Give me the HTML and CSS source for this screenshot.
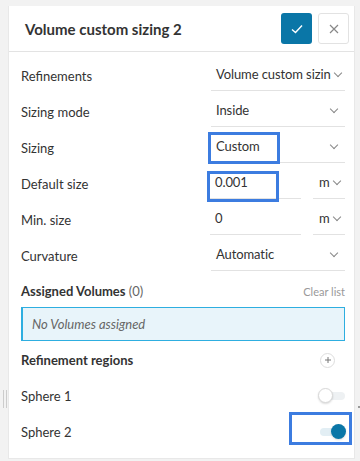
FILE: index.html
```html
<!DOCTYPE html>
<html>
<head>
  <title>Volume custom sizing 2</title>
  <link rel="stylesheet" href="styles.css">
</head>
<body>
  <span class="grip"></span>
  <span class="dot"></span>

  <div class="panel">
    <div class="panel-head">
      <h2 class="title">Volume custom sizing 2</h2>
      <button class="btn-ok" type="button">
        <svg width="14" height="14" viewBox="0 0 14 14"><path d="M2 7.5 L5.5 10.5 L12 3.5" fill="none" stroke="#fff" stroke-width="1.4"/></svg>
      </button>
      <button class="btn-close" type="button">
        <svg width="12" height="12" viewBox="0 0 12 12"><path d="M2 2 L10 10 M10 2 L2 10" fill="none" stroke="#888" stroke-width="1.2"/></svg>
      </button>
    </div>

    <div class="panel-body">
      <div class="row">
        <span class="label">Refinements</span>
        <div class="field"><span class="value">Volume custom sizin</span><span class="chev"></span></div>
      </div>
      <div class="row">
        <span class="label">Sizing mode</span>
        <div class="field"><span class="value">Inside</span><span class="chev"></span></div>
      </div>
      <div class="row">
        <span class="label">Sizing</span>
        <div class="field"><span class="value">Custom</span><span class="chev"></span><span class="mark mark-a"></span></div>
      </div>
      <div class="row">
        <span class="label">Default size</span>
        <div class="field-pair">
          <div class="field input"><span class="value">0.001</span><span class="mark mark-b"></span></div>
          <div class="field unit"><span class="value">m</span><span class="chev"></span></div>
        </div>
      </div>
      <div class="row">
        <span class="label">Min. size</span>
        <div class="field-pair">
          <div class="field input"><span class="value">0</span></div>
          <div class="field unit"><span class="value">m</span><span class="chev"></span></div>
        </div>
      </div>
      <div class="row">
        <span class="label">Curvature</span>
        <div class="field"><span class="value">Automatic</span><span class="chev"></span></div>
      </div>

      <div class="section-head">
        <span class="section-title">Assigned Volumes <span class="count">(0)</span></span>
        <span class="clear">Clear list</span>
      </div>
      <div class="empty-box">No Volumes assigned</div>

      <div class="row">
        <span class="section-title">Refinement regions</span>
        <span class="add">
          <svg width="8" height="8" viewBox="0 0 8 8"><path d="M4 1 V7 M1 4 H7" stroke="#777" stroke-width="1"/></svg>
        </span>
      </div>
      <div class="row">
        <span class="label">Sphere 1</span>
        <span class="toggle"><span class="knob"></span></span>
      </div>
      <div class="row">
        <span class="label">Sphere 2</span>
        <span class="toggle on"><span class="knob"></span><span class="mark mark-c"></span></span>
      </div>
    </div>
  </div>
</body>
</html>
```

FILE: styles.css
```css
body {
  margin: 0;
  background: #f2f2f2;
  font-family: Lato, "Open Sans", sans-serif;
  color: #333;
  position: relative;
  height: 461px;
  overflow: hidden;
}
.panel {
  position: absolute;
  left: 8px;
  top: 6px;
  width: 345px;
  height: 452px;
  background: #fff;
  border: 1px solid #e8e8e8;
  border-top: none;
}
.panel-head {
  display: flex;
  align-items: center;
  height: 45px;
  padding: 0 5px 0 16px;
  border-bottom: 1px solid #e3e3e3;
}
.title {
  flex: 1;
  margin: 0;
  font-size: 15px;
  font-weight: bold;
  color: #333;
}
.btn-ok, .btn-close {
  display: flex;
  align-items: center;
  justify-content: center;
  width: 31px;
  height: 31px;
  padding: 0;
  border-radius: 3px;
  cursor: pointer;
}
.btn-ok {
  background: #0a76a7;
  border: none;
  margin-right: 6px;
}
.btn-close {
  background: #fff;
  border: 1px solid #e2e2e2;
}
.panel-body {
  padding: 6px 9px 0 12px;
}
.row {
  display: flex;
  align-items: center;
  justify-content: space-between;
  height: 36px;
  font-size: 13px;
}
.label {
  color: #333;
}
.field {
  position: relative;
  display: flex;
  align-items: center;
  justify-content: space-between;
  width: 134px;
  height: 33px;
  box-sizing: border-box;
  border-bottom: 1px solid #e2e2e2;
  padding: 0 7px 0 5px;
  margin-top: -3px;
  font-size: 13px;
  color: #333;
}
.value {
  white-space: nowrap;
  letter-spacing: -0.1px;
}
.chev {
  flex: none;
  width: 5px;
  height: 5px;
  margin: 0 1px 3px 4px;
  border-right: 1px solid #888;
  border-bottom: 1px solid #888;
  transform: rotate(45deg);
}
.field-pair {
  display: flex;
  gap: 12px;
  margin-top: -3px;
}
.field-pair .field {
  margin-top: 0;
}
.field.input {
  width: 91px;
}
.field.unit {
  width: 32px;
  padding: 0 7px 0 6px;
}
.mark {
  position: absolute;
  border: 3px solid #3c7ce0;
  box-sizing: border-box;
}
.mark-a {
  left: -3px;
  top: 2px;
  width: 72px;
  height: 32px;
}
.mark-b {
  left: -3px;
  top: 5px;
  width: 72px;
  height: 31px;
}
.section-head {
  display: flex;
  align-items: center;
  justify-content: space-between;
  height: 20px;
  margin-top: 7px;
}
.section-title {
  font-size: 13px;
  font-weight: bold;
  color: #333;
}
.count {
  font-weight: normal;
  color: #666;
}
.clear {
  font-size: 11px;
  color: #999;
}
.empty-box {
  margin-top: 6px;
  height: 34px;
  box-sizing: border-box;
  display: flex;
  align-items: center;
  padding-left: 9px;
  background: #e8f4fa;
  border: 1px solid #2eaee0;
  border-left-width: 2px;
  font-size: 13px;
  font-style: italic;
  color: #666;
  margin-bottom: 1px;
}
.add {
  display: flex;
  align-items: center;
  justify-content: center;
  width: 13px;
  height: 13px;
  border: 1px solid #ddd;
  border-radius: 50%;
  margin-right: 10px;
}
.toggle {
  position: relative;
  width: 25px;
  height: 8px;
  border-radius: 4px;
  background: #eef1f3;
}
.knob {
  position: absolute;
  top: -4px;
  left: -2px;
  width: 15px;
  height: 15px;
  border-radius: 50%;
  background: #fff;
  box-sizing: border-box;
  border: 1px solid #d8d8d8;
  box-shadow: 0 1px 2px rgba(0, 0, 0, 0.15);
}
.toggle.on {
  background: #e2eef4;
}
.toggle.on .knob {
  left: auto;
  right: -1px;
  top: -4px;
  border: none;
  background: #0a76a7;
}
.mark-c {
  left: -31px;
  top: -16px;
  width: 63px;
  height: 33px;
}
.grip {
  position: absolute;
  left: 3px;
  top: 390px;
  width: 1px;
  height: 18px;
  border-left: 1px solid #ccc;
  border-right: 1px solid #ccc;
  padding-right: 1px;
}
.dot {
  position: absolute;
  left: 358px;
  top: 406px;
  width: 2px;
  height: 2px;
  background: #999;
}
```
